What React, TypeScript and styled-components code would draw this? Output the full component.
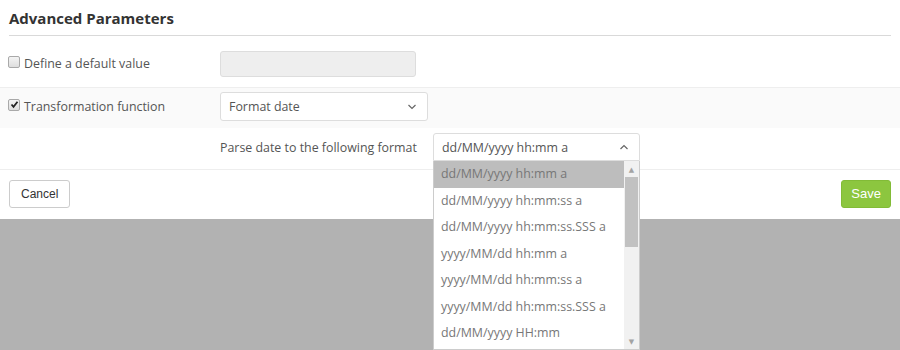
import { FC } from "react";
import styled, { createGlobalStyle } from "styled-components";

const formats = [
  "dd/MM/yyyy hh:mm a",
  "dd/MM/yyyy hh:mm:ss a",
  "dd/MM/yyyy hh:mm:ss.SSS a",
  "yyyy/MM/dd hh:mm a",
  "yyyy/MM/dd hh:mm:ss a",
  "yyyy/MM/dd hh:mm:ss.SSS a",
  "dd/MM/yyyy HH:mm",
];

const Chevron: FC<{ up?: boolean }> = ({ up }) => (
  <svg width="10" height="6" viewBox="0 0 10 6">
    <path
      d={up ? "M1.5 5 L5 1.5 L8.5 5" : "M1.5 1 L5 4.5 L8.5 1"}
      fill="none"
      stroke="#666"
      strokeWidth="1.2"
    />
  </svg>
);

const Check: FC<{ checked?: boolean }> = ({ checked }) => (
  <CheckBox>
    {checked && (
      <svg width="9" height="9" viewBox="0 0 9 9">
        <path d="M1.5 4.5 L3.5 6.8 L7.5 1.8" fill="none" stroke="#222" strokeWidth="1.8" />
      </svg>
    )}
  </CheckBox>
);

export default function App() {
  return (
    <>
      <GlobalStyle />
      <Panel>
        <Header>
          <Title>Advanced Parameters</Title>
        </Header>
        <Row>
          <LabelCell>
            <Check />
            <span>Define a default value</span>
          </LabelCell>
          <DisabledInput />
        </Row>
        <Row $shaded>
          <LabelCell>
            <Check checked />
            <span>Transformation function</span>
          </LabelCell>
          <Select $width={208}>
            <span>Format date</span>
            <Chevron />
          </Select>
        </Row>
        <SubRow>
          <SubLabel>Parse date to the following format</SubLabel>
          <DropdownWrap>
            <Select $width={207} $open>
              <span>dd/MM/yyyy hh:mm a</span>
              <Chevron up />
            </Select>
            <ListBox>
              <Options>
                {formats.map((f, i) => (
                  <Option key={f} $active={i === 0}>
                    {f}
                  </Option>
                ))}
              </Options>
              <ScrollTrack>
                <ScrollArrow>▲</ScrollArrow>
                <ScrollThumbArea>
                  <ScrollThumb />
                </ScrollThumbArea>
                <ScrollArrow>▼</ScrollArrow>
              </ScrollTrack>
            </ListBox>
          </DropdownWrap>
        </SubRow>
        <Footer>
          <CancelButton>Cancel</CancelButton>
          <SaveButton>Save</SaveButton>
        </Footer>
      </Panel>
    </>
  );
}

const GlobalStyle = createGlobalStyle`
  html, body {
    margin: 0;
    height: 350px;
    overflow: hidden;
    background: #b2b2b2;
    font-family: "Open Sans", "DejaVu Sans", sans-serif;
  }
`;

const Panel = styled.div`
  background: #fff;
  width: 900px;
`;

const Header = styled.div`
  margin: 0 9px;
  height: 35px;
  border-bottom: 1px solid #d9d9d9;
  display: flex;
  align-items: center;
`;

const Title = styled.h3`
  margin: 0;
  font-size: 15px;
  font-weight: 700;
  color: #333;
`;

const Row = styled.div<{ $shaded?: boolean }>`
  box-sizing: border-box;
  display: flex;
  align-items: center;
  height: ${(p) => (p.$shaded ? "41px" : "51px")};
  padding: ${(p) => (p.$shaded ? "0 0 3px 8px" : "4px 0 0 8px")};
  background: ${(p) => (p.$shaded ? "#fafafa" : "#fff")};
  border-top: ${(p) => (p.$shaded ? "1px solid #eee" : "none")};
`;

const LabelCell = styled.div`
  width: 212px;
  display: flex;
  align-items: center;
  gap: 4px;
  font-size: 12.4px;
  color: #555;
`;

const CheckBox = styled.div`
  width: 10px;
  height: 10px;
  border: 1px solid #a9a9a9;
  border-radius: 2px;
  background: linear-gradient(#f4f4f4, #dedede);
  display: flex;
  align-items: center;
  justify-content: center;
  margin-top: -4px;
`;

const DisabledInput = styled.div`
  width: 194px;
  height: 24px;
  background: #eee;
  border: 1px solid #ddd;
  border-radius: 3px;
`;

const Select = styled.div<{ $width: number; $open?: boolean }>`
  box-sizing: border-box;
  width: ${(p) => p.$width}px;
  height: ${(p) => (p.$open ? "28px" : "29px")};
  border: 1px solid #ddd;
  border-radius: ${(p) => (p.$open ? "3px 3px 0 0" : "3px")};
  background: #fff;
  display: flex;
  align-items: center;
  justify-content: space-between;
  padding: 0 10px 0 8px;
  font-size: 12.4px;
  color: #555;
`;

const SubRow = styled.div`
  box-sizing: border-box;
  display: flex;
  align-items: center;
  height: 42px;
  padding: 0 0 3px 220px;
  border-bottom: 1px solid #eee;
`;

const SubLabel = styled.div`
  font-size: 12.4px;
  color: #555;
  width: 213px;
`;

const DropdownWrap = styled.div`
  position: relative;
  z-index: 2;
`;

const ListBox = styled.div`
  position: absolute;
  top: 28px;
  left: 0;
  width: 207px;
  height: 189px;
  box-sizing: border-box;
  border: 1px solid #ccc;
  border-top: none;
  background: #fff;
  display: flex;
  overflow: hidden;
`;

const Options = styled.div`
  flex: 1;
  display: flex;
  flex-direction: column;
`;

const Option = styled.div<{ $active?: boolean }>`
  flex: none;
  height: 26.5px;
  line-height: 26.5px;
  padding-left: 7px;
  font-size: 12.4px;
  color: #777;
  white-space: nowrap;
  background: ${(p) => (p.$active ? "#bdbdbd" : "#fff")};
`;

const ScrollTrack = styled.div`
  width: 15px;
  background: #f1f1f1;
  display: flex;
  flex-direction: column;
`;

const ScrollArrow = styled.div`
  height: 16px;
  font-size: 7px;
  color: #a3a3a3;
  display: flex;
  align-items: center;
  justify-content: center;
  line-height: 1;
`;

const ScrollThumbArea = styled.div`
  flex: 1;
  padding: 0 1px;
`;

const ScrollThumb = styled.div`
  height: 70px;
  background: #c1c1c1;
`;

const Footer = styled.div`
  display: flex;
  justify-content: space-between;
  align-items: center;
  height: 49px;
  padding: 0 9px;
`;

const BaseButton = styled.button`
  height: 28px;
  border-radius: 3px;
  font-family: "Liberation Sans", Arial, sans-serif;
  font-size: 12px;
  padding: 0 11px;
  cursor: pointer;
  margin-bottom: 2px;
`;

const CancelButton = styled(BaseButton)`
  background: #fff;
  border: 1px solid #ccc;
  color: #333;
`;

const SaveButton = styled(BaseButton)`
  background: #8cc63f;
  border: 1px solid #82bb37;
  color: #fff;
  font-size: 13px;
  padding: 0 9px;
`;
